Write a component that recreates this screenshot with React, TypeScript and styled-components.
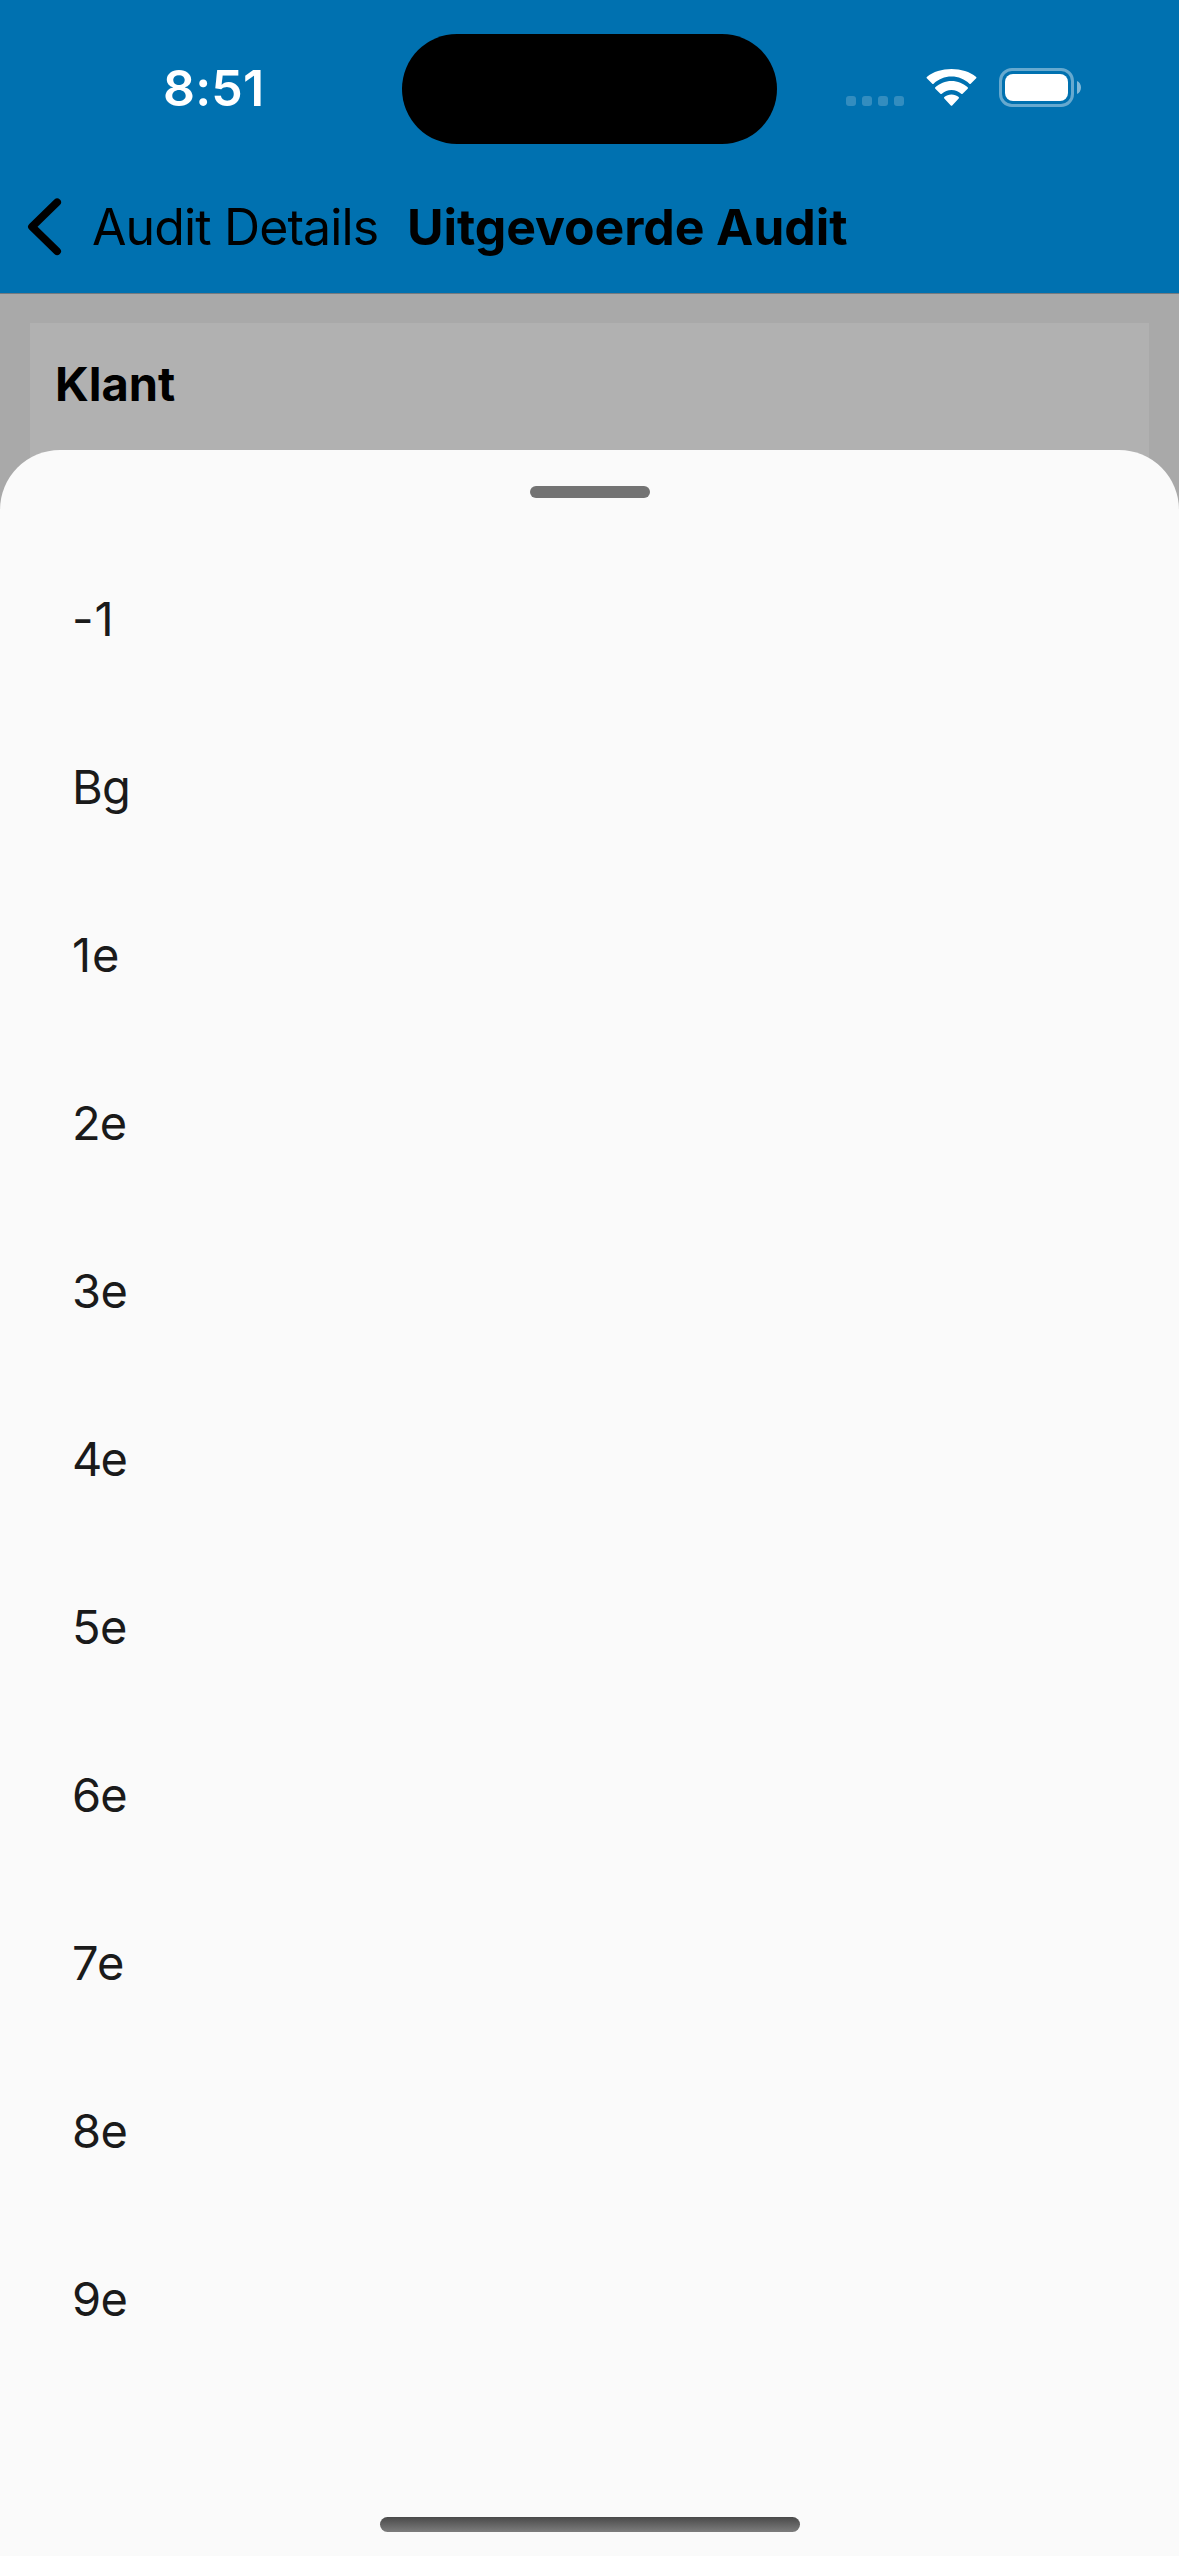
import React from "react";
import styled, { createGlobalStyle } from "styled-components";

const GlobalStyle = createGlobalStyle`
  *, *::before, *::after { box-sizing: border-box; }
  body {
    margin: 0;
    font-family: Inter, "Liberation Sans", sans-serif;
    background: #a9a9a9;
  }
`;

const Screen = styled.div`
  position: relative;
  width: 1179px;
  height: 2556px;
  display: flex;
  flex-direction: column;
  overflow: hidden;
  background: #a9a9a9;
`;

const Header = styled.header`
  height: 294px;
  background: #0071b0;
  border-bottom: 1px solid #757b80;
`;

const StatusBar = styled.div`
  height: 177px;
  display: grid;
  grid-template-columns: 402px 375px 402px;
`;

const Clock = styled.time`
  padding: 57px 0 0 163px;
  color: #fff;
  font-size: 50px;
  line-height: 62px;
  font-weight: 600;
  letter-spacing: 0.2px;
`;

const Island = styled.div`
  height: 110.5px;
  margin-top: 33.6px;
  border-radius: 56px;
  background: #000;
`;

const StatusIcons = styled.div`
  display: flex;
  align-items: flex-start;
  padding: 68px 0 0 69px;
`;

const SignalDots = styled.div`
  display: flex;
  gap: 6px;
  padding-top: 28px;
`;

const SignalDot = styled.span`
  width: 10px;
  height: 10px;
  border-radius: 3px;
  background: rgba(255, 255, 255, 0.2);
`;

const WifiSvg = styled.svg`
  margin: 1px 0 0 22px;
`;

const BatterySvg = styled.svg`
  margin-left: 22px;
`;

const NavBar = styled.nav`
  height: 116px;
  display: flex;
  align-items: flex-start;
  padding: 19px 0 0 26px;
  color: #000;
  white-space: nowrap;
`;

const BackLabel = styled.span`
  width: 318px;
  padding: 0 0 0 28px;
  font-size: 50px;
  line-height: 62px;
  letter-spacing: -0.88px;
`;

const Title = styled.h1`
  margin: 0;
  padding-left: 25px;
  font-size: 50px;
  line-height: 62px;
  font-weight: 700;
  letter-spacing: -0.1px;
`;

const Content = styled.main`
  flex: 1;
  padding: 29px 30px 0;
`;

const Card = styled.section`
  height: 300px;
  padding: 32px 25px;
  background: #b1b1b1;
`;

const CardLabel = styled.h2`
  margin: 0;
  font-size: 47px;
  line-height: 58px;
  font-weight: 700;
  color: #000;
`;

const Sheet = styled.section`
  position: absolute;
  left: 0;
  right: 0;
  bottom: 0;
  height: 2106px;
  display: flex;
  flex-direction: column;
  align-items: center;
  padding: 36px 0 24px;
  border-radius: 60px 60px 0 0;
  background: #fafafa;
`;

const Handle = styled.div`
  width: 120px;
  height: 12px;
  border-radius: 6px;
  background: #737373;
`;

const Options = styled.ul`
  flex: 1;
  align-self: stretch;
  margin: 0;
  padding: 37px 0 0;
  list-style: none;
`;

const Option = styled.li<{ $tracking: number }>`
  height: 168px;
  display: flex;
  align-items: center;
  padding: 0 72px;
  font-size: 47px;
  line-height: 58px;
  letter-spacing: ${({ $tracking }) => $tracking}px;
  color: #1a1a1a;
`;

const HomeIndicator = styled.div`
  width: 420px;
  height: 15px;
  border-radius: 8px;
  background: linear-gradient(#494949, #7d7d7d);
`;

const floors = [
  { label: "-1", tracking: 0.8 },
  { label: "Bg", tracking: -0.8 },
  { label: "1e", tracking: 0.8 },
  { label: "2e", tracking: -0.8 },
  { label: "3e", tracking: -0.6 },
  { label: "4e", tracking: -1.8 },
  { label: "5e", tracking: -0.6 },
  { label: "6e", tracking: -0.8 },
  { label: "7e", tracking: 0.8 },
  { label: "8e", tracking: -0.6 },
  { label: "9e", tracking: -0.6 },
];

const Wifi = () => (
  <WifiSvg width="51" height="37" viewBox="0 0 51 37" fill="#fff">
    <path d="M25.5 7.6c6.9 0 13.200 2.700 17.900 7.100.4.400 1 .4 1.300 0l5.500-5.400c.4-.4.4-1 0-1.400C43.700 2.700 35 0 25.500 0S7.300 2.700.8 7.900c-.4.400-.4 1 0 1.400l5.500 5.400c.3.400.9.4 1.300 0 4.700-4.400 11-7.100 17.900-7.100z" />
    <path d="M25.500 20.100c3.700 0 7.100 1.400 9.700 3.700.4.400 1 .4 1.400 0l5.100-5.100c.4-.4.4-1 0-1.400-4.300-3.800-10-6.300-16.200-6.300s-11.900 2.500-16.200 6.300c-.4.400-.4 1 0 1.400l5.100 5.100c.4.400 1 .4 1.400 0 2.600-2.300 6-3.700 9.700-3.700z" transform="translate(0 1)" />
    <path d="M32.700 29.400c.4-.4.4-1 0-1.400-2-1.600-4.500-2.600-7.200-2.600s-5.200 1-7.200 2.600c-.4.400-.4 1 0 1.400l6.500 7c.4.400 1 .4 1.400 0z" />
  </WifiSvg>
);

const Battery = () => (
  <BatterySvg width="82" height="39" viewBox="0 0 82 39">
    <rect x="1.500" y="1.500" width="72" height="36" rx="11.500" fill="none" stroke="#fff" strokeOpacity=".4" strokeWidth="3" />
    <rect x="6" y="6" width="63" height="27" rx="8" fill="#fff" />
    <path d="M78 13v13c2.500-1.100 4-3.600 4-6.500s-1.500-5.400-4-6.500z" fill="#fff" fillOpacity=".5" />
  </BatterySvg>
);

const BackChevron = () => (
  <svg width="38" height="62" viewBox="0 0 38 62" fill="none" stroke="#000" strokeWidth="7.800" strokeLinecap="round" strokeLinejoin="round">
    <path d="M31.100 6.300 6 30.700 31.100 55.200" />
  </svg>
);

export default function App() {
  return (
    <>
      <GlobalStyle />
      <Screen>
        <Header>
          <StatusBar>
            <Clock>8:51</Clock>
            <Island />
            <StatusIcons>
              <SignalDots>
                <SignalDot />
                <SignalDot />
                <SignalDot />
                <SignalDot />
              </SignalDots>
              <Wifi />
              <Battery />
            </StatusIcons>
          </StatusBar>
          <NavBar>
            <BackChevron />
            <BackLabel>Audit Details</BackLabel>
            <Title>Uitgevoerde Audit</Title>
          </NavBar>
        </Header>
        <Content>
          <Card>
            <CardLabel>Klant</CardLabel>
          </Card>
        </Content>
        <Sheet>
          <Handle />
          <Options>
            {floors.map(({ label, tracking }) => (
              <Option key={label} $tracking={tracking}>
                {label}
              </Option>
            ))}
          </Options>
          <HomeIndicator />
        </Sheet>
      </Screen>
    </>
  );
}
